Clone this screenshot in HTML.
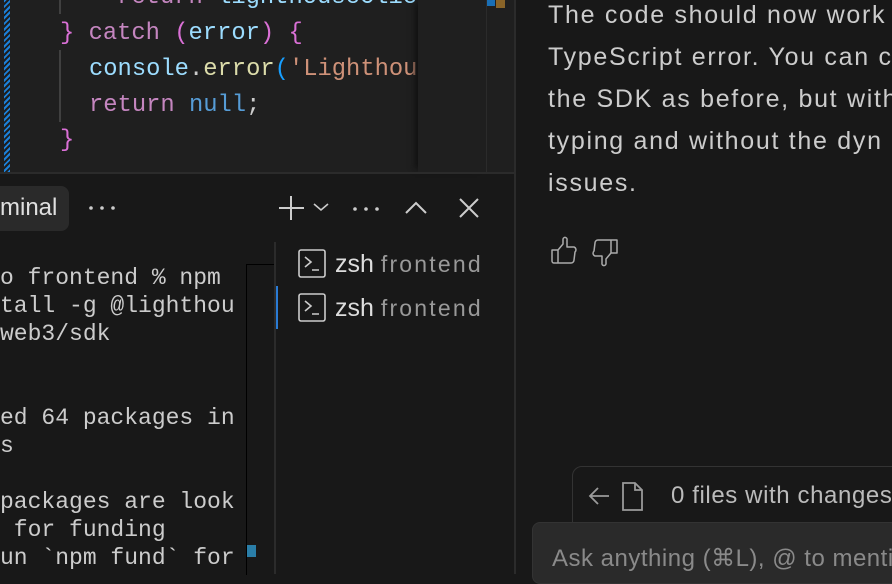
<!DOCTYPE html><html><head><style>
body{margin:0;width:892px;height:574px;overflow:hidden;background:#181818;position:relative;font-family:"Liberation Sans",sans-serif}
.a{position:absolute}
.code{font-family:"Liberation Mono",monospace;font-size:23.8px;white-space:pre;line-height:36px}
.term{font-family:"Liberation Mono",monospace;font-size:23px;white-space:pre;line-height:28px;color:#cccccc}
.chat{font-size:25px;line-height:42px;color:#cccccc;white-space:pre;letter-spacing:1.7px}
</style></head><body>
<div class="a" style="left:0;top:0;width:515px;height:172px;background:#1f1f1f"></div>
<div class="a" style="left:4px;top:0;width:6px;height:172px;background:repeating-linear-gradient(135deg,#1b80d8 0 2px,#1f1f1f 2px 4px)"></div>
<div class="a" style="left:59px;top:50px;width:2px;height:72px;background:#404040"></div>
<div class="a" style="left:59px;top:0;width:2px;height:14px;background:#404040"></div>
<div class="a code" style="left:60px;top:-20px;color:#9cdcfe"><span style="color:#c586c0">    return</span> lighthouseClient</div>
<div class="a code" style="left:60px;top:16px"><span style="color:#da70d6">}</span> <span style="color:#c586c0">catch</span> <span style="color:#da70d6">(</span><span style="color:#9cdcfe">error</span><span style="color:#da70d6">)</span> <span style="color:#da70d6">{</span></div>
<div class="a code" style="left:89px;top:52px"><span style="color:#9cdcfe">console</span><span style="color:#ccc">.</span><span style="color:#dcdcaa">error</span><span style="color:#179fff">(</span><span style="color:#ce9178">'Lighthou</span></div>
<div class="a code" style="left:89px;top:88px"><span style="color:#c586c0">return</span> <span style="color:#569cd6">null</span><span style="color:#ccc">;</span></div>
<div class="a code" style="left:60px;top:123px;color:#da70d6">}</div>
<div class="a" style="left:418px;top:0;width:68px;height:172px;background:#1f1f1f;box-shadow:-6px 0 6px -3px #111"></div>
<div class="a" style="left:486px;top:0;width:1px;height:172px;background:#2b2b2b"></div>
<div class="a" style="left:487px;top:0;width:8px;height:6px;background:#1a6fb5"></div>
<div class="a" style="left:496px;top:0;width:9px;height:8px;background:#8a6428"></div>
<div class="a" style="left:0;top:172px;width:515px;height:2px;background:#2b2b2b"></div>
<div class="a" style="left:514px;top:0;width:2px;height:574px;background:#2b2b2b"></div>
<div class="a" style="left:-10px;top:186px;width:79px;height:45px;background:#2a2a2a;border-radius:8px"></div>
<div class="a" style="left:0;top:194px;font-size:24px;color:#e0e0e0">minal</div>
<svg class="a" style="left:88px;top:204px" width="30" height="8" fill="#ccc"><circle cx="3" cy="4" r="1.8"/><circle cx="14" cy="4" r="1.8"/><circle cx="25" cy="4" r="1.8"/></svg>
<svg class="a" style="left:276px;top:194px" width="60" height="28" fill="none" stroke="#ccc" stroke-width="2"><path d="M15 2V26M3 14H28"/><path d="M38 10l7 6 7-6" stroke-width="1.6"/></svg>
<svg class="a" style="left:352px;top:205px" width="30" height="8" fill="#ccc"><circle cx="3" cy="4" r="1.8"/><circle cx="14" cy="4" r="1.8"/><circle cx="25" cy="4" r="1.8"/></svg>
<svg class="a" style="left:403px;top:196px" width="80" height="24" fill="none" stroke="#ccc" stroke-width="2"><path d="M3 17l10-10 10 10"/><path d="M57 3l18 18M75 3L57 21"/></svg>
<div class="a term" style="left:0;top:264px">o frontend % npm
tall -g @lighthou
web3/sdk


ed 64 packages in
s

packages are look
 for funding
un `npm fund` for</div>
<div class="a" style="left:246px;top:264px;width:28px;height:310px;border-left:1px solid #000;border-top:1px solid #000"></div>
<div class="a" style="left:247px;top:545px;width:9px;height:12px;background:#2a7ea8"></div>
<div class="a" style="left:274px;top:242px;width:2px;height:332px;background:#2b2b2b"></div>
<div class="a" style="left:276px;top:286px;width:2px;height:43px;background:#2a7bd4"></div>
<svg class="a" style="left:298px;top:249px" width="30" height="80" fill="none" stroke="#ccc" stroke-width="1.6"><rect x="1" y="1" width="26" height="27" rx="2"/><path d="M7 8l6 5-6 5M14 21h7"/><rect x="1" y="45" width="26" height="27" rx="2"/><path d="M7 52l6 5-6 5M14 65h7"/></svg>
<div class="a" style="left:335px;top:250px;font-size:25px;color:#ddd;white-space:nowrap">zsh <span style="font-size:23px;color:#999;letter-spacing:2.2px">frontend</span></div>
<div class="a" style="left:335px;top:294px;font-size:25px;color:#ddd;white-space:nowrap">zsh <span style="font-size:23px;color:#999;letter-spacing:2.2px">frontend</span></div>
<div class="a chat" style="left:548px;top:-6px">The code should now work
TypeScript error. You can c
the SDK as before, but with
typing and without the dyn
issues.</div>
<svg class="a" style="left:549px;top:236px" width="72" height="32" fill="none" stroke="#aaa" stroke-width="1.5" stroke-linejoin="round"><path d="M3 14h6v13H5a2 2 0 0 1-2-2zM9 14l5-6V3a2 2 0 0 1 4 1v7h7a3 3 0 0 1 1 5l-1 8a3 3 0 0 1-3 3H9"/><path d="M68 4v13h-6V4zM62 17l-5 6v5a2 2 0 0 1-4-1v-7h-7a3 3 0 0 1-1-5l1-8a3 3 0 0 1 3-3h13"/></svg>
<div class="a" style="left:572px;top:466px;width:340px;height:80px;border:1px solid #333;border-radius:10px;background:#181818"></div>
<svg class="a" style="left:587px;top:480px" width="66" height="34" fill="none" stroke="#9a9a9a" stroke-width="1.8"><path d="M22 16H3M11 8l-8 8 8 8"/><path d="M36 3h12l7 7v20H36z M48 3v7h7"/></svg>
<div class="a" style="left:671px;top:482px;font-size:24px;color:#bbb;letter-spacing:0.6px;white-space:nowrap">0 files with changes</div>
<div class="a" style="left:532px;top:522px;width:380px;height:60px;background:#2a2a2a;border-radius:8px;border:1px solid #333"></div>
<div class="a" style="left:552px;top:544px;font-size:24px;color:#8a8a8a;letter-spacing:0.5px;white-space:nowrap">Ask anything (⌘L), @ to mention</div>
</body></html>
